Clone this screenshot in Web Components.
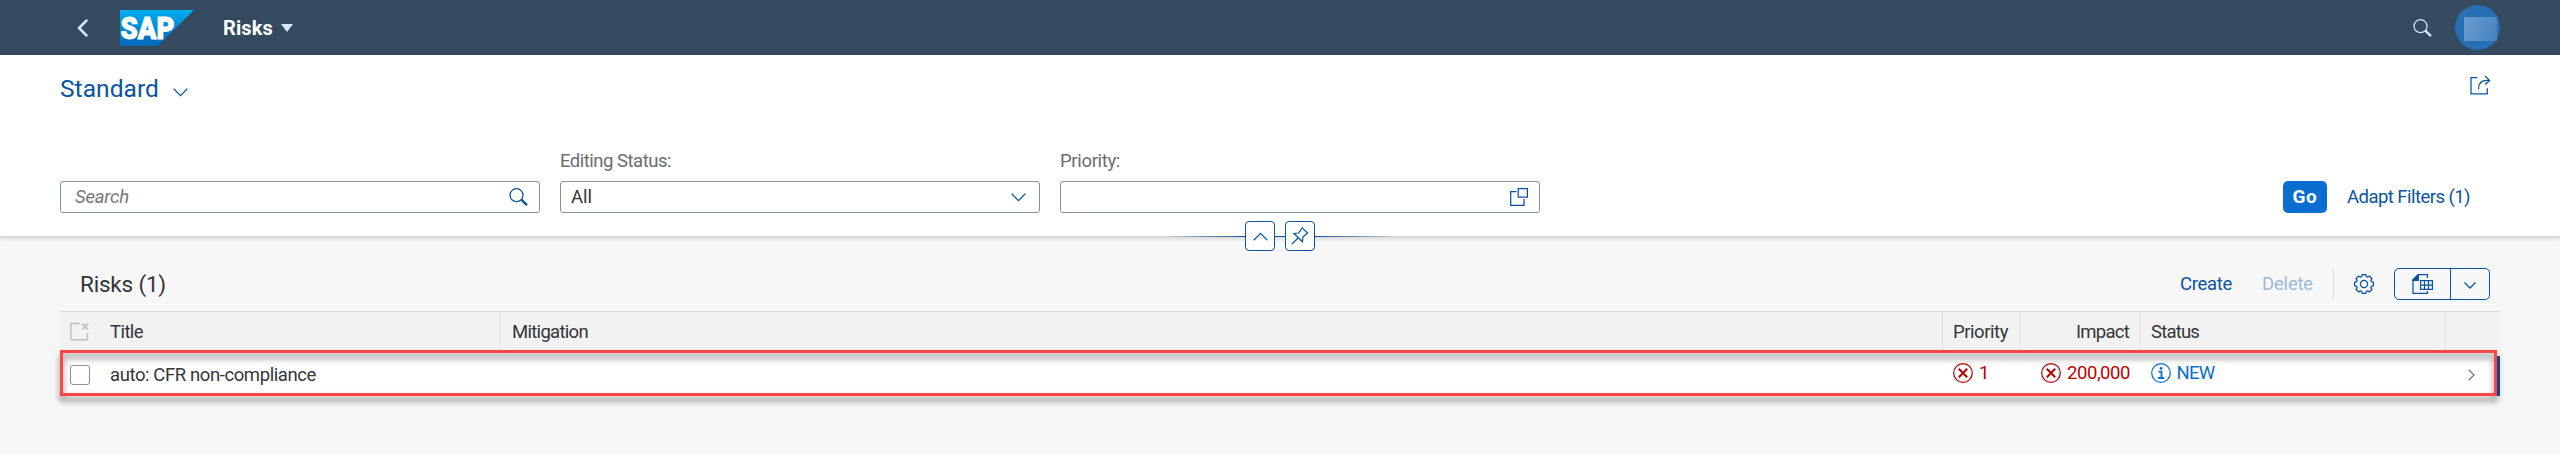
<!DOCTYPE html>
<html lang="en"><head><meta charset="utf-8"><title>Risks</title>
<style>
html,body{margin:0;padding:0}
body{width:2560px;height:454px;overflow:hidden;background:#f7f7f7;font-family:Roboto,"Liberation Sans",sans-serif;color:#32363a;font-size:18.5px}
</style></head><body>
<risk-app></risk-app>
<script>
const define = (name, html, after) => {
  const t = document.createElement('template');
  t.innerHTML = html;
  customElements.define(name, class extends HTMLElement {
    constructor() {
      super();
      this.attachShadow({mode: 'open'}).appendChild(t.content.cloneNode(true));
    }
    connectedCallback() { if (after) after(this); }
  });
};

/* One line of text whose tracking is tuned so that it fills its width. */
define('ui-text', `<style>:host{display:block;white-space:pre;line-height:24px;flex:none}span{display:inline-block}</style><span><slot></slot></span>`, el => {
  const w = parseFloat(el.getAttribute('w'));
  if (!w) return;
  const s = el.shadowRoot.querySelector('span');
  el.style.width = w + 'px';
  const n = el.textContent.length;
  s.style.letterSpacing = ((w - s.getBoundingClientRect().width) / n).toFixed(3) + 'px';
});

const icons = {
  back: [11,18,'<path d="M10.200.8 2 9l8.200 8.200" stroke-width="2.600"/>'],
  down: [15,9,'<path d="M.7.8l6.800 6.800L14.300.8"/>'],
  up: [15,9,'<path d="M.7 8.200 7.500 1.400l6.800 6.800"/>'],
  downs: [12,7,'<path d="M.5.5 6 6l5.500-5.500"/>'],
  next: [7,12,'<path d="M.7.700 6 6 .7 11.300"/>'],
  tri: [12,8,'<path d="M0 0h12L6 8z" fill="currentColor" stroke="none"/>'],
  search: [19,18,'<circle cx="7.500" cy="7.200" r="6.500"/><path d="m12.300 11.700 5.700 5.500" stroke-width="2.400"/>'],
  share: [21,20,'<path d="M7.200 2.500H1v16.300h16.300V13.200M8.500 14.200c0-5.700 3.200-8.800 8.500-8.800h2.300M15.300 1.200l4.300 4.200-4.300 4.100"/>'],
  help: [18,18,'<path d="M6.600 3.500H.7v13.800H14V11M8.200.6h9.200V9H8.200z"/>'],
  pin: [18,18,'<path d="M1 17l6-6M3 6.500l8.500 8.300.3-4.800 4.800-4L11.200.9 7.700 6z"/>'],
  clear: [19,19,'<path d="M9.500 1.500H.8v16.200h16.700V11" stroke-width="1.400"/><path d="M12.300 1.700l5.700 5.600M18 1.700l-5.700 5.600" stroke-width="1.800"/>'],
  error: [20,20,'<circle cx="10" cy="10" r="9.300"/><path d="m5.800 5.800 8.400 8.400M14.200 5.800l-8.400 8.400" stroke-width="2"/>'],
  info: [20,20,'<circle cx="10" cy="10" r="9.300"/><path d="M7.500 8.700h3v6M7 15h6" stroke-width="1.800"/><circle cx="10.100" cy="5.500" r="1.400" fill="currentColor" stroke="none"/>'],
  export: [21,20,'<path d="M6.500.7H15.400V4M1 6.500V19.300H15.400V17"/><path d="M0 7V5.800L5.800 0H7v7z" fill="currentColor" stroke="none"/><path d="M8.600 6.700h11.800v8.600H8.600zM8.600 11h11.800M12.500 6.700v8.600M16.500 6.700v8.600"/>'],
  gear: [20,20,'<circle cx="10" cy="10" r="3.600"/><path class="teeth"/>']
};
const gear = () => {
  let d = '';
  for (let i = 0; i < 8; i++) {
    [[-17,7.800],[-11,9.600],[11,9.600],[17,7.800]].forEach(([a,r], j) => {
      const t = (i * 45 + a) * Math.PI / 180;
      d += (i + j ? 'L' : 'M') + (10 + r * Math.sin(t)).toFixed(2) + ' ' + (10 - r * Math.cos(t)).toFixed(2);
    });
  }
  return d + 'Z';
};
define('ui-icon', `<style>:host{display:block;flex:none;line-height:0}svg{display:block;fill:none;stroke:currentColor;stroke-width:1.250;overflow:visible}</style><div></div>`, el => {
  const [w, h, p] = icons[el.getAttribute('name')];
  el.shadowRoot.querySelector('div').innerHTML = `<svg width="${w}" height="${h}" viewBox="0 0 ${w} ${h}">${p}</svg>`;
  const g = el.shadowRoot.querySelector('.teeth');
  if (g) g.setAttribute('d', gear());
});

define('sap-logo', `<style>:host{display:block;width:74px;height:36px}svg{display:block}text{font:900 31px Roboto,"Liberation Sans",sans-serif}</style>
<svg width="74" height="36" viewBox="0 0 74 36"><defs><linearGradient id="g" x2="0" y2="1"><stop stop-color="#00aeef"/><stop offset="1" stop-color="#0066b8"/></linearGradient></defs>
<path d="M0 0h74L38 36H0z" fill="url(#g)"/><text x="0.500" y="29" fill="#fff" stroke="#fff" stroke-width="1" textLength="54" lengthAdjust="spacingAndGlyphs">SAP</text></svg>`);

define('shell-bar', `<style>:host{display:flex;align-items:center;height:55px;background:#354a5f;color:#d1e8ff;padding:0 60px 0 77px;box-sizing:border-box}
sap-logo{margin:1px 29px 0 32px}.t{font-weight:700;font-size:20px;color:#fff}.tri{margin-left:8px}.gap{flex:1}.s{margin-right:23px}
.av{width:45px;height:45px;border-radius:50%;background:#286eb4;display:grid;place-items:center}.av i{width:33px;height:24px;margin:3px 0 0 6px;background:linear-gradient(110deg,#6c9dcf,#4682c0)}</style>
<ui-icon name="back"></ui-icon><sap-logo></sap-logo><ui-text class="t" w="50">Risks</ui-text><ui-icon class="tri" name="tri"></ui-icon><div class="gap"></div><ui-icon class="s" name="search"></ui-icon><div class="av"><i></i></div>`);

define('filter-field', `<style>:host{display:flex;flex-direction:column;width:480px}.l{height:32px;color:#6a6d70}
.b{height:32px;box-sizing:border-box;border:1px solid #89919a;border-radius:3px;background:#fff;display:flex;align-items:center;justify-content:space-between;padding:0 11px 0 10px}</style>
<div class="l"><slot name="label"></slot></div><div class="b"><div><slot></slot></div><slot name="icon"></slot></div>`);

define('filter-bar', `<style>:host{display:block;box-sizing:border-box;height:182px;background:#fff;border-bottom:1px solid #d0d1d2;box-shadow:0 2px 4px #0002;padding:20px 59px 0 60px;color:#0854a0}
.top{display:flex;height:54px;padding:0 10px 0 0}.v{font-size:24.5px;line-height:28px}.v+ui-icon{margin:13px 0 0 14px}.share{margin-left:auto}
.row{display:flex;align-items:flex-end;gap:20px;margin-top:20px}.row>*{flex:none}.ph{font-style:italic;color:#74777a;margin-left:4px}.val{color:#32363a}.dn{margin-right:2px}
.go{margin-left:auto;width:44px;height:32px;border-radius:5px;background:#0a6ed1;color:#fff;display:grid;place-items:center;font-weight:700;font-size:19px}.adapt{margin:0 31px 4px 0}
.pins{display:flex;justify-content:center;gap:10px;margin-top:8px;position:relative;padding-right:1px}
.pins:before{content:"";position:absolute;left:1104px;width:232px;top:15px;height:1px;background:linear-gradient(90deg,transparent,#0854a0 35%,#0854a0 65%,transparent)}
.p{position:relative;width:30px;height:30px;border:1px solid #0854a0;border-radius:4px;background:#fff;display:grid;place-items:center;box-sizing:border-box}</style>
<div class="top"><ui-text class="v" w="99">Standard</ui-text><ui-icon name="down"></ui-icon><ui-icon class="share" name="share"></ui-icon></div>
<div class="row"><filter-field><ui-text class="ph" w="54">Search</ui-text><ui-icon slot="icon" name="search"></ui-icon></filter-field>
<filter-field><ui-text slot="label" w="111">Editing Status:</ui-text><ui-text class="val" w="21">All</ui-text><ui-icon class="dn" slot="icon" name="down"></ui-icon></filter-field>
<filter-field><ui-text slot="label" w="60">Priority:</ui-text><ui-icon slot="icon" name="help"></ui-icon></filter-field>
<div class="go"><ui-text w="25">Go</ui-text></div><ui-text class="adapt" w="123">Adapt Filters (1)</ui-text></div>
<div class="pins"><div class="p"><ui-icon name="up"></ui-icon></div><div class="p"><ui-icon name="pin"></ui-icon></div></div>`);

define('table-toolbar', `<style>:host{display:flex;align-items:center;height:32px;color:#0854a0;padding:0 10px 0 20px}.h{font-size:22.5px;color:#32363a}.gap{flex:1}.del{color:#9cbbd9;margin-left:30px}
.sep{width:1px;height:30px;background:#d9d9d9;margin:0 20px 0 20px}.split{margin-left:20px;width:96px;height:32px;box-sizing:border-box;border:1px solid #0854a0;border-radius:5px;display:flex}
.a{width:55px;border-right:1px solid #0854a0;display:grid;place-items:center}.c{flex:1;display:grid;place-items:center}.c ui-icon{margin-top:2px}</style>
<ui-text class="h" w="86">Risks (1)</ui-text><div class="gap"></div><ui-text w="52">Create</ui-text><ui-text class="del" w="51">Delete</ui-text><div class="sep"></div><ui-icon name="gear"></ui-icon>
<div class="split"><div class="a"><ui-icon name="export"></ui-icon></div><div class="c"><ui-icon name="downs"></ui-icon></div></div>`);

define('risk-table', `<style>:host{display:block;width:2440px;position:relative}.r{display:grid;grid-template-columns:441px 1442px 77px 120px 306px 54px;box-sizing:border-box}
.r>div{display:flex;align-items:center;box-sizing:border-box;padding:0 10px}
.head{height:39px;border-top:1px solid #d9d9d9;background:#f2f2f2}.head>div{border-right:1px solid #e0e0e0;height:39px}.head>div:last-child{border:0}
.row{height:46px;background:linear-gradient(#f7f7f7 6px,#fff 6px);position:relative}.row:after{content:"";position:absolute;right:0;top:6px;width:3px;height:40px;background:#0854a0}.row>div{padding-bottom:2px;padding-top:1px}.row>.name{padding:3px 0 0 10px}.end{justify-content:flex-end}
.clear{color:#bfbfbf;margin-right:21px}.cb{width:20px;height:20px;box-sizing:border-box;border:1px solid #89919a;border-radius:3px;background:#fff;margin:1px 20px 0 0}
.red{color:#b00}.blue{color:#0a6ed1}.st{gap:6px}.row>.blue{padding-left:10.500px}.next{color:#74777a;margin:4px 0 0 12px}.ht{margin-left:1px}
.mark{position:absolute;left:0;top:39px;width:2437px;height:46px;box-sizing:border-box;border:3px solid #ff4444;filter:drop-shadow(0 5px 3px #0008)}</style>
<div class="r head"><div><ui-icon class="clear" name="clear"></ui-icon><ui-text w="33">Title</ui-text></div><div><ui-text w="76" class="ht">Mitigation</ui-text></div><div><ui-text w="55">Priority</ui-text></div><div class="end"><ui-text w="53">Impact</ui-text></div><div><ui-text w="48" class="ht">Status</ui-text></div><div></div></div>
<div class="r row"><div class="name"><span class="cb"></span><ui-text w="206">auto: CFR non-compliance</ui-text></div><div></div><div class="st red"><ui-icon name="error"></ui-icon><ui-text w="9">1</ui-text></div><div class="st red end"><ui-icon name="error"></ui-icon><ui-text w="63">200,000</ui-text></div><div class="st blue"><ui-icon name="info"></ui-icon><ui-text w="38">NEW</ui-text></div><div><ui-icon class="next" name="next"></ui-icon></div></div>
<div class="mark"></div>`);

define('risk-app', `<style>:host{display:flex;flex-direction:column;width:2560px;height:454px}main{padding:31px 60px 0}risk-table{margin-top:11px}</style>
<shell-bar></shell-bar><filter-bar></filter-bar><main><table-toolbar></table-toolbar><risk-table></risk-table></main>`);
</script></body></html>
